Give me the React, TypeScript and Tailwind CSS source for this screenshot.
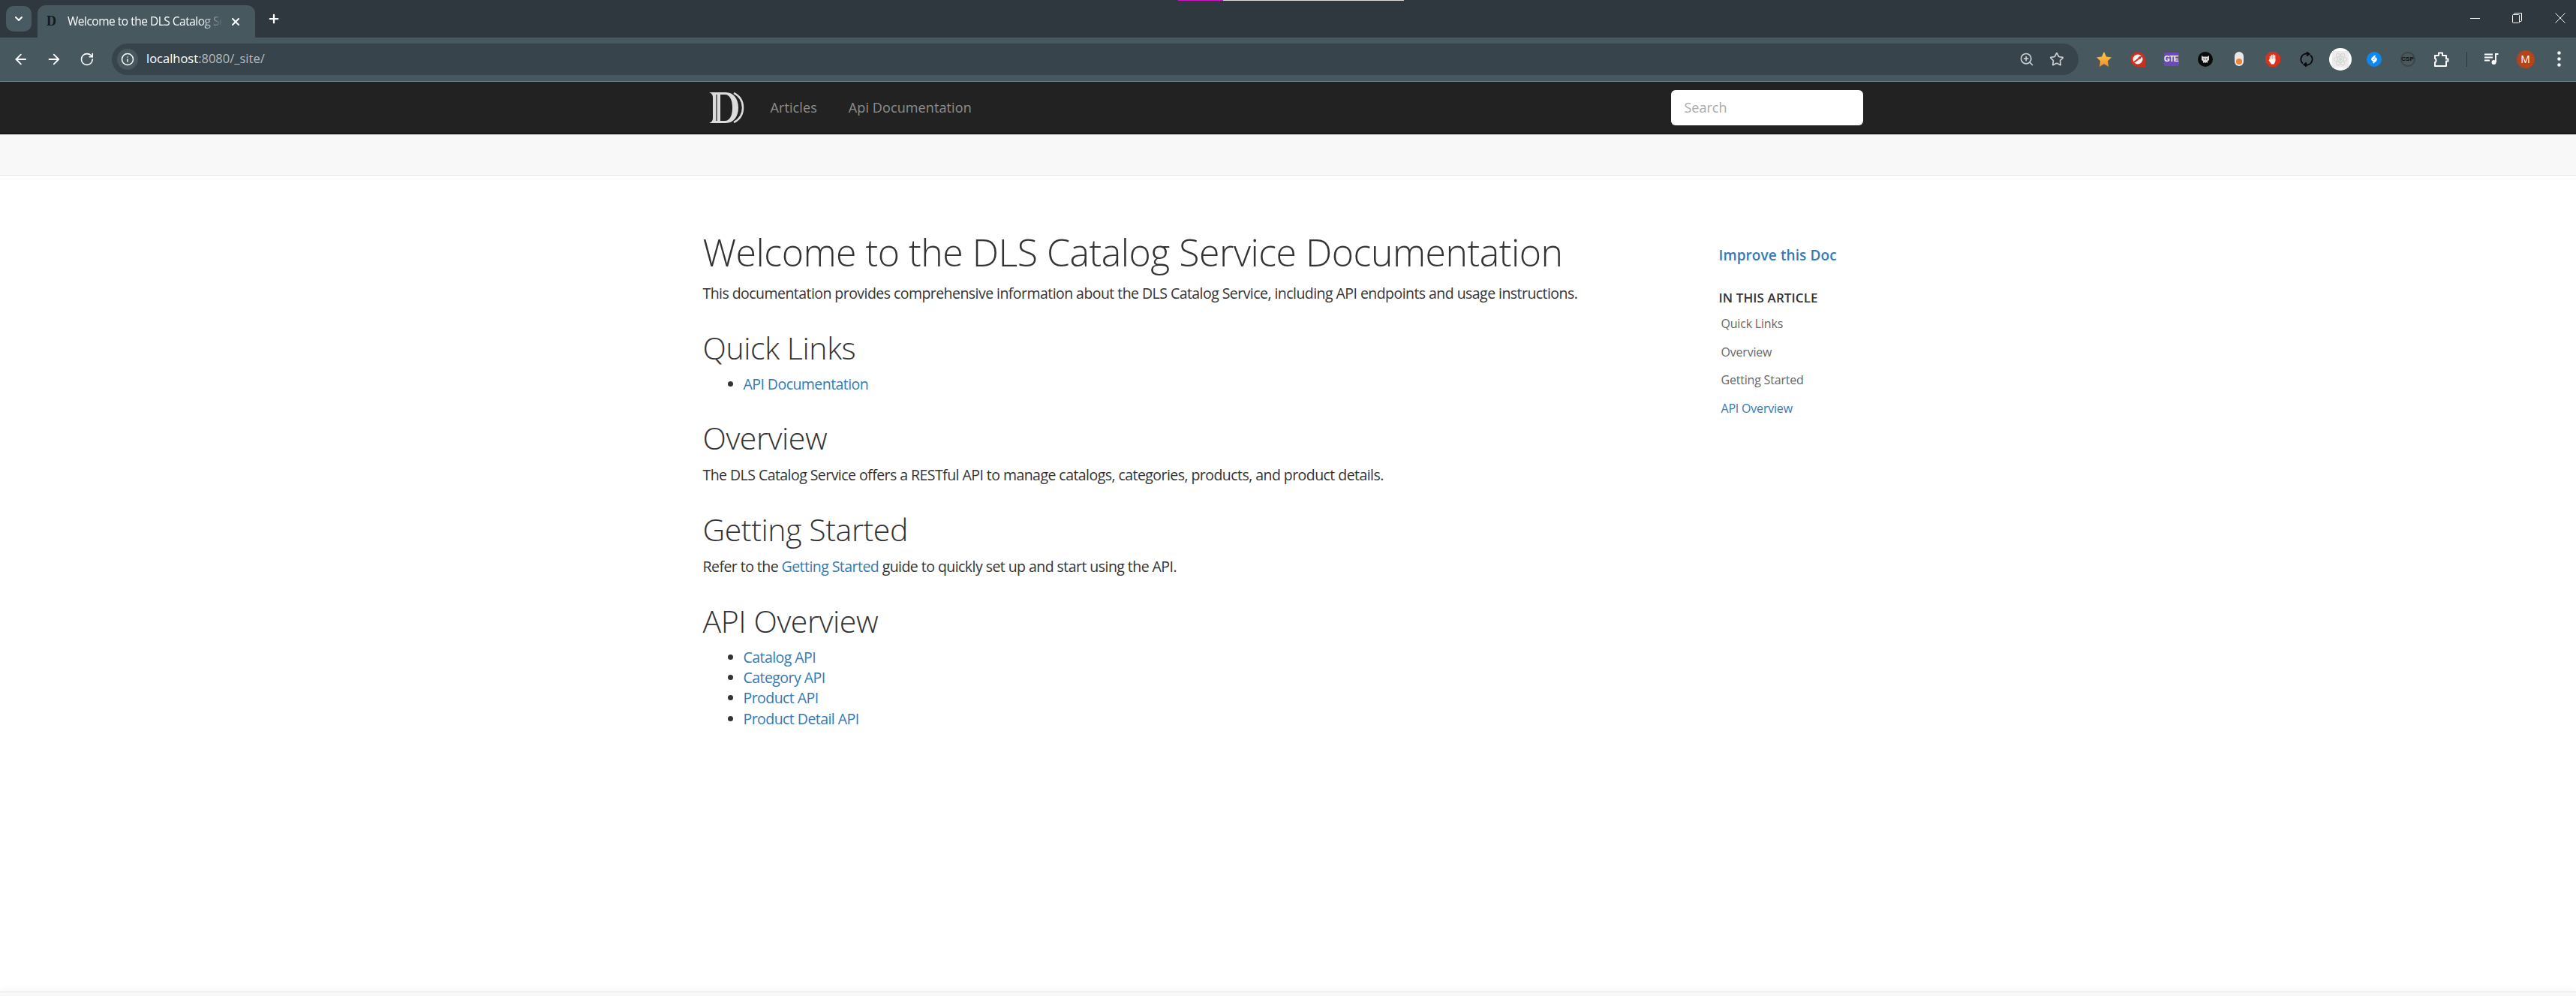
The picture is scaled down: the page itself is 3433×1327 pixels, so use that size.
import { ArrowLeft, ArrowRight, ChevronDown, Info, Plus, RotateCw, Star, X, ZoomIn } from "lucide-react";

const FONT = "font-['Open_Sans','Noto_Sans',sans-serif]";

function DlsLogo() {
  return (
    <svg width="47" height="41" viewBox="0 0 47 41" fill="none">
      <path d="M0 0h22c11 0 17 9 17 20.500S33 41 22 41H0c3-1 5-3 5-7V7C5 3 3 1 0 0z" fill="#dcdcdc" />
      <path d="M15 3h6c7 0 10 8 10 17.500S28 38 21 38h-6z" fill="#222" />
      <path d="M10 3v35" stroke="#444" strokeWidth="1.5" />
      <path d="M33 1c8 4 12 11 12 19.500S41 36 33 40" stroke="#dcdcdc" strokeWidth="2.500" />
    </svg>
  );
}

function TabStrip() {
  return (
    <div className="flex h-[50px] items-end bg-[#2e383e] pl-2">
      <div className="mb-2 flex h-[34px] w-[34px] items-center justify-center rounded-[10px] bg-[#4a5a62]">
        <ChevronDown size={16} strokeWidth={3} color="#fff" />
      </div>
      <div className="ml-2 flex h-[43px] w-[290px] items-center rounded-t-[11px] bg-[#47585f] pl-[12px]">
        <span className="w-[28px] font-['Liberation_Serif',serif] text-[18px] font-bold text-[#16191b]">D</span>
        <span className={`${FONT} w-[207px] overflow-hidden text-[15.5px] tracking-[-0.5px] whitespace-nowrap text-white [mask-image:linear-gradient(to_right,#000_85%,transparent)]`}>
          Welcome to the DLS Catalog Service Documentation
        </span>
        <X size={16} strokeWidth={3} color="#fff" className="ml-[9px]" />
      </div>
      <Plus size={18} strokeWidth={3} color="#fff" className="mb-[16px] ml-4" />
      <div className="mb-[19px] ml-auto flex items-center pr-[14px]">
        <div className="h-px w-[13px] bg-white" />
        <svg width="13" height="14" viewBox="0 0 13 14" fill="none" stroke="#fff" className="ml-[43px]">
          <rect x="0.500" y="2.500" width="9" height="11" rx="1" />
          <path d="M2.500 2.500v-1a1 1 0 0 1 1-1h9v10a1 1 0 0 1-1 1h-2" />
        </svg>
        <svg width="14" height="14" viewBox="0 0 14 14" stroke="#fff" className="ml-[44px]">
          <path d="M0.500 0.500l13 13M13.500 0.500l-13 13" />
        </svg>
      </div>
    </div>
  );
}

function Slot({ children }: { children: React.ReactNode }) {
  return <div className="flex w-[45px] shrink-0 items-center justify-center">{children}</div>;
}

function ExtensionIcons() {
  return (
    <div className="ml-[11px] flex shrink-0 items-center">
      <Slot>
        <svg width="20" height="20" viewBox="0 0 20 20">
          <defs>
            <linearGradient id="star-fill" x1="0" y1="0" x2="0" y2="1">
              <stop offset="0" stopColor="#fbd34a" />
              <stop offset="1" stopColor="#f1892a" />
            </linearGradient>
          </defs>
          <path d="M10 0l3 6.500 7 .9-5.100 4.800L16.200 20 10 16.300 3.800 20l1.300-7.800L0 7.400l7-.9z" fill="url(#star-fill)" />
        </svg>
      </Slot>
      <Slot>
        <svg width="20" height="20" viewBox="0 0 20 20">
          <path d="M10 0a10 10 0 0 1 10 10v10H10a10 10 0 0 1 0-20z" fill="#c9301f" />
          <circle cx="10" cy="10" r="6.500" fill="#f4f4f4" />
          <path d="M5 14l10-8" stroke="#c9301f" strokeWidth="2" />
          <circle cx="12.500" cy="8" r="1.800" fill="#c9301f" />
        </svg>
      </Slot>
      <Slot>
        <div className="flex h-[18px] w-[20px] items-center justify-center rounded-[2px] bg-[#6a4bb8] font-['Liberation_Sans',sans-serif] text-[10px] leading-none font-bold tracking-[-0.5px] text-white">
          GTE
        </div>
      </Slot>
      <Slot>
        <svg width="20" height="20" viewBox="0 0 20 20">
          <circle cx="10" cy="10" r="10" fill="#0b0b0b" />
          <path d="M5 5l2 1.500h6L15 5v6l-2 1.500V15l-1.500-1-1.500 1-1.500-1L7 15v-2.500L5 11z" fill="#d9d9d9" />
          <path d="M7.500 8.500l2 1.500-1.500.5zM12.500 8.500l-2 1.500 1.500.5z" fill="#0b0b0b" />
        </svg>
      </Slot>
      <Slot>
        <div className="flex h-[19px] w-[12px] items-end justify-center rounded-full bg-[#e8e8e8] pb-[2px]">
          <div className="h-[8px] w-[8px] rounded-full bg-[#ef8433]" />
        </div>
      </Slot>
      <Slot>
        <svg width="20" height="20" viewBox="0 0 20 20">
          <path d="M6 0h8l6 6v8l-6 6H6l-6-6V6z" fill="#d8321f" />
          <path d="M6.500 6.500v5M8.500 4.500v5.500M10.500 4v6M12.500 5v6.500" stroke="#fff" strokeWidth="1.600" strokeLinecap="round" />
          <path d="M6 9.500h7.300V13l-1.800 3.500H8L4.500 11.500z" fill="#fff" />
        </svg>
      </Slot>
      <Slot>
        <svg width="18" height="20" viewBox="0 0 18 20" fill="none" stroke="#0a0a0a" strokeWidth="2">
          <path d="M4 15.500A7.300 7.300 0 0 1 11 3" />
          <path d="M14 4.500A7.300 7.300 0 0 1 7 17" />
          <path d="M9 .500L12.500 3 9 5.500M9 14.500L5.500 17 9 19.500" />
        </svg>
      </Slot>
      <Slot>
        <div className="flex h-[30px] w-[30px] items-center justify-center rounded-full bg-white">
          <svg width="22" height="22" viewBox="0 0 22 22" fill="none" stroke="#d4d4d4">
            <rect width="22" height="22" fill="#ececec" stroke="none" />
            <circle cx="11" cy="11" r="1.600" fill="#d4d4d4" />
            <ellipse cx="11" cy="11" rx="9" ry="3.500" />
            <ellipse cx="11" cy="11" rx="9" ry="3.500" transform="rotate(60 11 11)" />
            <ellipse cx="11" cy="11" rx="9" ry="3.500" transform="rotate(120 11 11)" />
          </svg>
        </div>
      </Slot>
      <Slot>
        <svg width="20" height="20" viewBox="0 0 20 20" fill="none">
          <circle cx="10" cy="10" r="10" fill="#0f87f2" />
          <path d="M11 5.500L7.500 8.500a2 2 0 0 0 2.600 3L12 10M9 14.500l3.500-3a2 2 0 0 0-2.600-3L8 10" stroke="#fff" strokeWidth="1.800" strokeLinecap="round" />
        </svg>
      </Slot>
      <Slot>
        <div className="flex h-[20px] w-[20px] items-center justify-center rounded-full border-2 border-[#3f4447] font-['Liberation_Sans',sans-serif] text-[8px] leading-none font-bold text-[#111]">
          CSP
        </div>
      </Slot>
      <Slot>
        <svg width="21" height="20" viewBox="0 0 21 20" fill="none" stroke="#fff" strokeWidth="2" strokeLinejoin="round">
          <path d="M2 5h5V1.500h5V5h5v4.500h2.500v3H17V19H2v-5c2 0 2-5 0-5z" />
        </svg>
      </Slot>
      <div className="mr-[10px] ml-[11px] h-[20px] w-px bg-[#2b353a]" />
      <Slot>
        <svg width="19" height="15" viewBox="0 0 19 15" fill="none" stroke="#fff" strokeWidth="2">
          <path d="M0 1.500h11M0 5.500h11M0 9.500h7" />
          <path d="M18.500 1H15v11" />
          <circle cx="12.500" cy="12" r="2" fill="#fff" />
        </svg>
      </Slot>
      <Slot>
        <div className={`${FONT} flex h-[24px] w-[24px] items-center justify-center rounded-full bg-[#b4441a] text-[14px] text-white`}>M</div>
      </Slot>
      <Slot>
        <svg width="5" height="21" viewBox="0 0 5 21" fill="#fff">
          <circle cx="2.500" cy="2.500" r="2.200" />
          <circle cx="2.500" cy="10.500" r="2.200" />
          <circle cx="2.500" cy="18.500" r="2.200" />
        </svg>
      </Slot>
    </div>
  );
}

function Toolbar() {
  return (
    <div className="flex h-[59px] items-center border-b border-[#6d838c] bg-[#47585f] pb-[1px] pl-[17px]">
      <ArrowLeft size={22} strokeWidth={2} color="#fff" />
      <ArrowRight size={22} strokeWidth={2} color="#fff" className="ml-[22px]" />
      <RotateCw size={20} strokeWidth={2} color="#fff" className="ml-[24px]" />
      <div className="ml-[23px] flex h-[42px] w-[2621px] shrink-0 items-center rounded-full bg-[#38444b] pl-[7px]">
        <div className="flex h-[28px] w-[28px] items-center justify-center rounded-full bg-[#47585f]">
          <Info size={18} color="#fff" />
        </div>
        <span className={`${FONT} ml-[11px] text-[16.5px] text-white`}>
          localhost<span className="text-[#b4bcc0]">:8080/_site/</span>
        </span>
        <ZoomIn size={20} color="#c9ced1" className="mr-[20px] ml-auto" />
        <Star size={20} color="#c9ced1" className="mr-[19px]" />
      </div>
      <ExtensionIcons />
    </div>
  );
}

function NavBar() {
  return (
    <div className="h-[70px] border-b border-black bg-[#222]">
      <div className="mx-auto flex h-full w-[1562px] items-center pr-[15px] pl-[9px]">
        <DlsLogo />
        <a className={`${FONT} ml-[35px] text-[18px] tracking-[0.1px] text-[#8e8e8e]`}>Articles</a>
        <a className={`${FONT} ml-[42px] text-[18px] tracking-[0.1px] text-[#8e8e8e]`}>Api Documentation</a>
        <div className={`${FONT} ml-auto flex h-[47px] w-[256px] items-center rounded-[6px] bg-white pl-[18px] text-[18px] text-[#aaa]`}>
          Search
        </div>
      </div>
    </div>
  );
}

function Article() {
  const h2 = "mt-[36.5px] text-[41px] leading-[1.1] font-[350] tracking-[-0.4px] text-[#333]";
  const body = "mt-[13px] leading-[27px] tracking-[-0.55px]";
  const list = "mt-[12px] list-disc pl-[54px] leading-[27.3px] tracking-[-0.55px]";
  const link = "text-[#337ab7]";
  return (
    <article className={`w-[1355px] pt-[75px] pl-[1px] text-[19.5px] text-[#333] ${FONT}`}>
      <h1 className="text-[50px] leading-[1.1] font-[350] tracking-[-0.5px]">Welcome to the DLS Catalog Service Documentation</h1>
      <p className={body}>
        This documentation provides comprehensive information about the DLS Catalog Service, including API endpoints and usage instructions.
      </p>
      <h2 className={h2}>Quick Links</h2>
      <ul className={list}>
        <li><a className={link}>API Documentation</a></li>
      </ul>
      <h2 className={h2}>Overview</h2>
      <p className={body}>
        The DLS Catalog Service offers a RESTful API to manage catalogs, categories, products, and product details.
      </p>
      <h2 className={h2}>Getting Started</h2>
      <p className={body}>
        Refer to the <a className={link}>Getting Started</a> guide to quickly set up and start using the API.
      </p>
      <h2 className={h2}>API Overview</h2>
      <ul className={list}>
        <li><a className={link}>Catalog API</a></li>
        <li><a className={link}>Category API</a></li>
        <li><a className={link}>Product API</a></li>
        <li><a className={link}>Product Detail API</a></li>
      </ul>
    </article>
  );
}

function SideToc() {
  const items = ["Quick Links", "Overview", "Getting Started"];
  return (
    <aside className={`pt-[92px] ${FONT}`}>
      <a className="text-[19px] font-semibold tracking-[0.1px] text-[#337ab7]">Improve this Doc</a>
      <h5 className="mt-[29px] text-[17px] font-semibold tracking-[0.1px] text-[#333]">IN THIS ARTICLE</h5>
      <ul className="mt-[11px] flex flex-col gap-[15.5px] pl-[3px] text-[16px] leading-[22px] tracking-[-0.2px] text-[#666]">
        {items.map((item) => (
          <li key={item}>{item}</li>
        ))}
        <li className="text-[#337ab7]">API Overview</li>
      </ul>
    </aside>
  );
}

export default function App() {
  return (
    <div className="relative flex h-[1327px] flex-col overflow-hidden bg-white">
      <div className="absolute top-0 left-[1570px] flex h-px">
        <div className="w-[60px] bg-[#d014c4]" />
        <div className="w-[241px] bg-[#ddd]" />
      </div>
      <TabStrip />
      <Toolbar />
      <NavBar />
      <div className="h-[55px] border-b border-[#e7e7e7] bg-[#f8f8f8]" />
      <main className="mx-auto flex w-[1562px] flex-1">
        <Article />
        <SideToc />
      </main>
      <footer className="h-[6px] border-t border-[#e7e7e7] bg-[#f8f8f8] shadow-[0_-4px_6px_rgba(0,0,0,0.03)]" />
    </div>
  );
}
